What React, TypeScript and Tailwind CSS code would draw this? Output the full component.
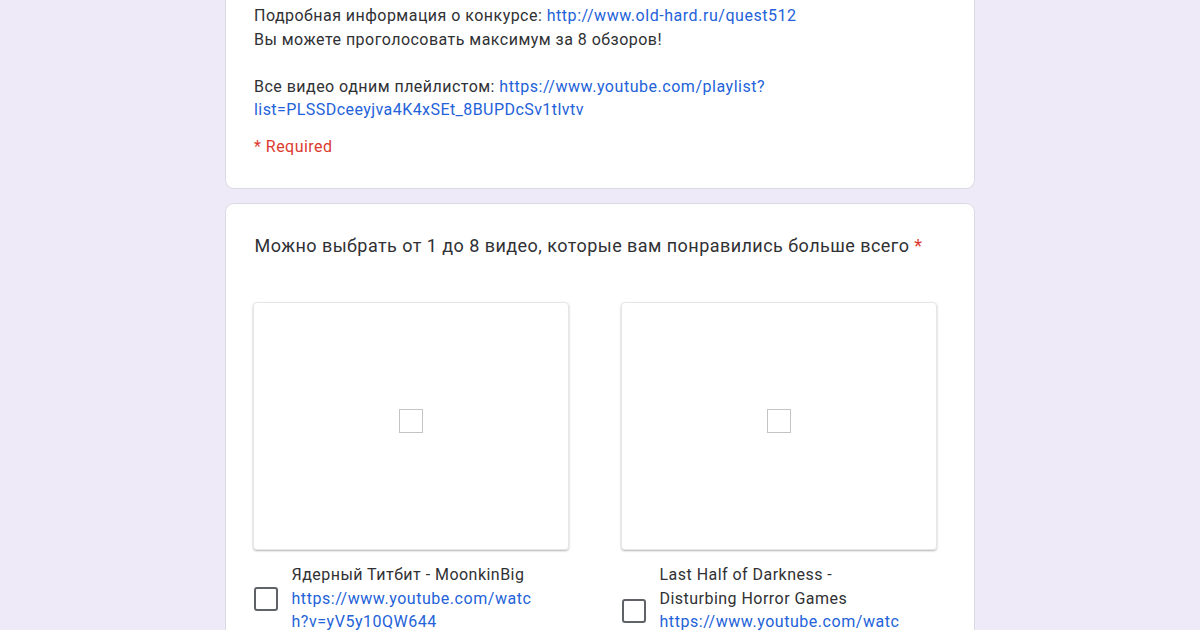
const videos = [
    {
        title: ['Ядерный Титбит - MoonkinBig'],
        link: ['https://www.youtube.com/watc', 'h?v=yV5y10QW644'],
        checkboxClassName: 'mt-6',
    },
    {
        title: ['Last Half of Darkness -', 'Disturbing Horror Games'],
        link: ['https://www.youtube.com/watc'],
        checkboxClassName: 'mt-9',
    },
];

export default function App() {
    return (
        <div className="h-[630px] overflow-hidden bg-[#eeeaf8] font-[Roboto,sans-serif] text-[16px] leading-[23.5px] tracking-[0.47px] text-[#303134]">
            <div className="mx-auto w-[750px]">
                <div className="h-[189px] rounded-b-[9px] border border-t-0 border-[#dadae4] bg-white px-[28px] pt-[4px]">
                    <p className="whitespace-nowrap">
                        <span>Подробная информация о конкурсе: </span>
                        <a className="tracking-[0.54px] text-[#2362d9]">http://www.old-hard.ru/quest512</a>
                    </p>
                    <p>Вы можете проголосовать максимум за 8 обзоров!</p>
                    <p className="mt-[23.5px] whitespace-nowrap">
                        <span>Все видео одним плейлистом: </span>
                        <a className="tracking-[0.53px] text-[#2362d9]">https://www.youtube.com/playlist?</a>
                    </p>
                    <p className="tracking-[0.44px] text-[#2362d9]">list=PLSSDceeyjva4K4xSEt_8BUPDcSv1tlvtv</p>
                    <p className="mt-[13px] text-[#dc3a30]">* Required</p>
                </div>
                <div className="mt-[14px] h-[460px] rounded-[9px] border border-[#dadae4] bg-white pl-[27px] pt-[29px]">
                    <h2 className="pl-[1.5px] text-[18px] leading-[26px] tracking-[0.45px] whitespace-nowrap">
                        <span>Можно выбрать от 1 до 8 видео, которые вам понравились больше всего</span>
                        <span className="text-[#dc3a30]"> *</span>
                    </h2>
                    <div className="mt-[43px] flex gap-[52px]">
                        {videos.map(({ title, link, checkboxClassName }, index) => (
                            <div key={index} className="w-[316px]">
                                <div className="flex h-[248px] items-center justify-center rounded-[4px] border border-[#e6e6e6] shadow-[0_1px_2px_rgba(0,0,0,0.3)]">
                                    <div className="mt-[-10px] size-6 border border-[#c4c4c4]" />
                                </div>
                                <div className="mt-[13px] flex items-start">
                                    <div className={`ml-px size-6 shrink-0 rounded-[3px] border-2 border-[#5f6368] ${checkboxClassName}`} />
                                    <div className="ml-[13.5px] whitespace-nowrap">
                                        {title.map((line) => (
                                            <p key={line}>{line}</p>
                                        ))}
                                        {link.map((line) => (
                                            <p key={line} className="tracking-[0.54px] text-[#2362d9]">{line}</p>
                                        ))}
                                    </div>
                                </div>
                            </div>
                        ))}
                    </div>
                </div>
            </div>
        </div>
    );
}
